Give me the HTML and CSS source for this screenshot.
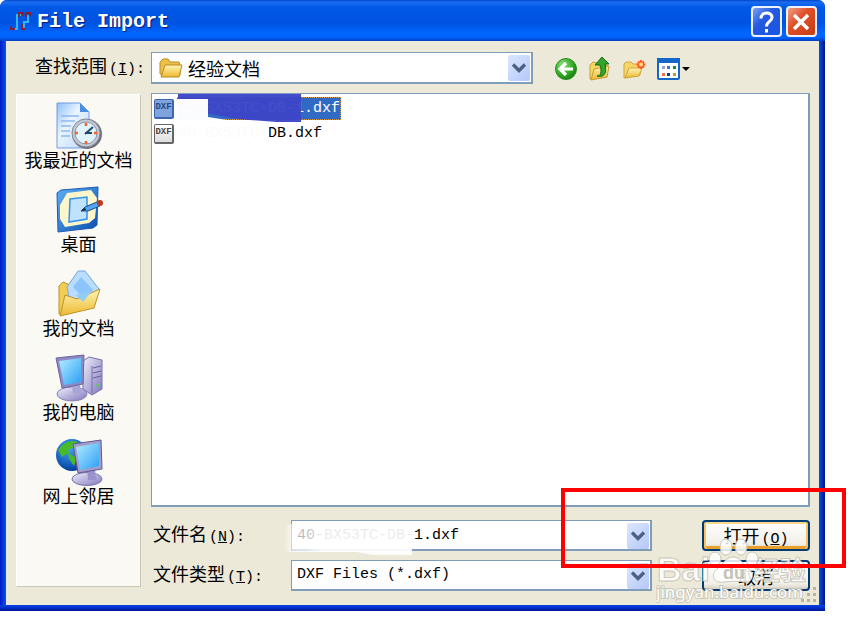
FILE: index.html
```html
<!DOCTYPE html>
<html lang="zh-CN">
<head>
    <meta charset="UTF-8">
    <meta name="viewport" content="width=device-width, initial-scale=1.0">
    <title>File Import</title>
    <link rel="stylesheet" href="styles.css">
</head>
<body>
    <!-- Shared gradients and shapes -->
    <svg class="defs" aria-hidden="true">
        <defs>
            <linearGradient id="folder" x1="0" y1="0" x2="0" y2="1"><stop offset="0" stop-color="#fff5b4"/><stop offset="1" stop-color="#edb82f"/></linearGradient>
            <linearGradient id="screen" x1="0" y1="0" x2="1" y2="1"><stop offset="0" stop-color="#b5ecff"/><stop offset="1" stop-color="#2aa0f5"/></linearGradient>
            <linearGradient id="purple" x1="0" y1="0" x2="1" y2="1"><stop offset="0" stop-color="#f0effb"/><stop offset="1" stop-color="#7f78bd"/></linearGradient>
            <linearGradient id="sheet" x1="0" y1="0" x2="1" y2="1"><stop offset="0" stop-color="#8fc0fa"/><stop offset="0.4" stop-color="#e9f4ff"/><stop offset="1" stop-color="#b9d7fb"/></linearGradient>
            <linearGradient id="board" x1="0" y1="0" x2="1" y2="1"><stop offset="0" stop-color="#5fb0f4"/><stop offset="1" stop-color="#0b4fae"/></linearGradient>
            <radialGradient id="globe" cx="0.4" cy="0.3" r="0.7"><stop offset="0" stop-color="#3fa4ff"/><stop offset="1" stop-color="#043f9c"/></radialGradient>
            <radialGradient id="green" cx="0.35" cy="0.3" r="0.8"><stop offset="0" stop-color="#8ee07a"/><stop offset="0.6" stop-color="#30a821"/><stop offset="1" stop-color="#117510"/></radialGradient>
        </defs>
        <symbol id="chevron" viewBox="0 0 22 26">
            <path d="M5 9.500l6 6 6-6" fill="none" stroke="#4d6185" stroke-width="3.400"/>
        </symbol>
    </svg>

    <main class="dialog">
        <header class="title-bar">
            <svg class="app-icon" viewBox="0 0 22 22">
                <path d="M3 18h4V4h4M12 17h2v-6h4V4" fill="none" stroke="#2fb9f2" stroke-width="2"/>
                <path d="M5 18H1v-3M9 6V2h4v3M12 13v5h3M16 6V2h4v3" fill="none" stroke="#8c1c2c" stroke-width="1.800"/>
            </svg>
            <h1>File Import</h1>
            <button class="title-btn help" aria-label="Help">
                <svg viewBox="0 0 26 26"><path d="M8 9.500c0-7.500 11-7 11-1 0 4-5.500 4-5.500 9M13.500 20v3.500" fill="none" stroke="#fff" stroke-width="3"/></svg>
            </button>
            <button class="title-btn close" aria-label="Close">
                <svg viewBox="0 0 26 26"><path d="M6 6l14 14M20 6L6 20" stroke="#fff" stroke-width="3.500"/></svg>
            </button>
        </header>

        <div class="toolbar">
            <label for="lookIn">查找范围<span class="key">(<u>I</u>):</span></label>
            <div class="combo look-in">
                <svg class="combo-icon" viewBox="0 0 24 20">
                    <path d="M1 16V4l3-3h5l2 3h9l1 3v10z" fill="#eec04a" stroke="#b88a1c"/>
                    <path d="M2 19L6 7h17l-3 12z" fill="url(#folder)" stroke="#b98a20"/>
                </svg>
                <select id="lookIn"><option>经验文档</option></select>
                <svg class="arrow"><use href="#chevron"/></svg>
            </div>
            <div class="tools">
                <button aria-label="Back">
                    <svg viewBox="0 0 24 24"><circle cx="12" cy="12" r="10.500" fill="url(#green)" stroke="#238b1a"/><path d="M19 12H7M12 6l-6 6 6 6" fill="none" stroke="#fff" stroke-width="3.200"/></svg>
                </button>
                <button aria-label="Up one level">
                    <svg viewBox="0 0 24 24"><path d="M2 22V8l3-3 4 1 2 2h8v12z" fill="#f6d667" stroke="#c89b32"/><path d="M3 23l3-11 15-3-2 11z" fill="url(#folder)" stroke="#c89b32"/><path d="M9 19c4 0 5-4 3-11H7l7-8 7 7h-4c2 8 0 14-8 12z" fill="#32a62a" stroke="#136d16"/></svg>
                </button>
                <button aria-label="New folder">
                    <svg viewBox="0 0 24 24"><path d="M2 21V7l2-2h5l2 2h7v11z" fill="#f6d667" stroke="#d0a43c"/><path d="M3 21l4-10h13l-3 8z" fill="url(#folder)" stroke="#d0a43c"/><path d="M19 3v9M14.500 7.500h9M16 4.500l6 6M22 4.500l-6 6" stroke="#ff5a22" stroke-width="2.200"/><circle cx="19" cy="7.500" r="2" fill="#ffd98a"/></svg>
                </button>
                <button class="views" aria-label="Views">
                    <svg viewBox="0 0 36 24"><rect x="2" y="2" width="21" height="20" rx="1" fill="#fff" stroke="#1467c8" stroke-width="2"/><path d="M1 1h23v5H1z" fill="#1467c8"/>
                        <path d="M6 9h3v3H6z" fill="#a69bd0"/><path d="M11 9h3v3h-3z" fill="#2878e0"/><path d="M17 9h3v3h-3z" fill="#179326"/><path d="M6 16h3v3H6z" fill="#f07048"/><path d="M11 16h3v3h-3z" fill="#143b9c"/><path d="M17 16h3v3h-3z" fill="#c69a20"/>
                        <path d="M26 10h8l-4 4z"/></svg>
                </button>
            </div>
        </div>

        <div class="content">
            <nav class="places">
                <button>
                    <svg viewBox="0 0 48 48">
                        <path d="M2 1h23l9 9v36H2z" fill="url(#sheet)" stroke="#6f9de0"/><path d="M25 1v9h9z" fill="#4a8fe6"/>
                        <path d="M6 14h18M6 19h14M6 24h10M6 29h9M6 34h9" stroke="#8db8ef" stroke-width="1.500"/>
                        <circle cx="32" cy="32" r="15" fill="#6c6f7a"/><circle cx="31" cy="31" r="14" fill="#c6c9d1" stroke="#858995"/><circle cx="31" cy="31" r="11" fill="#e0f3ff" stroke="#8297b5"/>
                        <path d="M30 32l8-7M30 31h7" stroke="#244a6c" stroke-width="2"/><path d="M31 21v3M31 39v3M20 31h3M39 31h3" stroke="#f16229" stroke-width="2.500"/>
                    </svg>
                    <span>我最近的文档</span>
                </button>
                <button>
                    <svg viewBox="0 0 48 48">
                        <path d="M2 7l4-3 37-3-1 38-4 3-35 4z" fill="url(#board)" stroke="#1c5cb4"/>
                        <path d="M12 7l24-3 6 8-2 20-6 5-24 4-5-8V19z" fill="#fff6cc"/>
                        <path d="M15 13l17-2v22l-18 3z" fill="#bfe2ff" stroke="#3292ea" stroke-width="1.500"/>
                        <path d="M26 25l4-4 12-5 3 4-12 5z" fill="#53a5f2" stroke="#174b90"/><path d="M26 25l4-3 1 2z" fill="#111"/><circle cx="45" cy="17" r="3" fill="#c3371e"/>
                    </svg>
                    <span>桌面</span>
                </button>
                <button>
                    <svg viewBox="0 0 48 48">
                        <path d="M4 44V16l4-4 7 3 7 9 22-5-5 17z" fill="#f2cd52" stroke="#bd9227"/>
                        <path d="M12 17L23 1h7l14 18-16 17-14-9z" fill="#b9dcff" stroke="#6fa9e4"/><path d="M18 17l8-10 12 13-9 9z" fill="#8cc5fb"/>
                        <path d="M5 46l5-21 12 4 23-10-6 19z" fill="url(#folder)" stroke="#bd9227"/>
                        <path d="M21 25l16-4-9 11z" fill="#93cdf4"/>
                    </svg>
                    <span>我的文档</span>
                </button>
                <button>
                    <svg viewBox="0 0 48 48">
                        <path d="M28 7l6-4 13 3v29l-10 6-9-6z" fill="url(#purple)" stroke="#7771ab"/><path d="M37 12v27" stroke="#7771ab"/><path d="M38 14l8-2M38 19l8-2M38 24l8-2" stroke="#67609f"/><circle cx="43" cy="31" r="1.500" fill="#4fd14a"/>
                        <ellipse cx="17" cy="40" rx="15" ry="7" fill="url(#purple)" stroke="#8882b5"/><path d="M17 31h8l2 9h-9z" fill="#aaa5d8"/>
                        <path d="M1 4l28-3-1 29-21 4z" fill="#8e88c4" stroke="#6b65a1"/><path d="M4 7l22-3v24L9 31z" fill="url(#screen)"/>
                    </svg>
                    <span>我的电脑</span>
                </button>
                <button>
                    <svg viewBox="0 0 48 48">
                        <circle cx="17" cy="17" r="16" fill="url(#globe)"/><path d="M3 12q8-12 20-8l-3 5-7 3 3 5 6 2-3 9-5-7-1-6-6 4z" fill="#49b92a"/>
                        <ellipse cx="32" cy="41" rx="15" ry="6.500" fill="url(#purple)" stroke="#7771ab"/><path d="M32 31h8l1 11h-8z" fill="#9a94ce"/>
                        <path d="M18 6l28-4 1 29-24 4z" fill="#a39dcc" stroke="#5f5993"/><path d="M21 9l23-4v23l-19 4z" fill="url(#screen)"/>
                    </svg>
                    <span>网上邻居</span>
                </button>
            </nav>

            <div class="right">
                <div class="file-list">
                    <ul>
                        <li class="selected"><i class="dxf">DXF</i><span>40-BX53TC-DB-1.dxf</span></li>
                        <li><i class="dxf">DXF</i><span>40-BX53TC-DB.dxf</span></li>
                    </ul>
                    <!-- Hides the project numbers -->
                    <svg class="list-mask" viewBox="0 0 200 60">
                        <path d="M26 0H149V28H125L86 25 26 14z" fill="#3d46c8" fill-opacity="0.970"/>
                        <path d="M24 5H56V23L75 26 125 30 117 32V48L110 54H26L22 48V14z" fill="#fff" fill-opacity="0.980"/>
                    </svg>
                </div>

                <form class="fields" onsubmit="return false">
                    <label for="fileName">文件名<span class="key">(<u>N</u>):</span></label>
                    <div class="combo">
                        <input id="fileName" type="text" value="40-BX53TC-DB-1.dxf">
                        <svg class="name-mask" viewBox="0 0 130 34">
                            <defs><linearGradient id="smear"><stop offset="0" stop-color="#fff" stop-opacity="0"/><stop offset="0.080" stop-color="#fff" stop-opacity="0.700"/><stop offset="0.200" stop-color="#fff" stop-opacity="0.750"/><stop offset="0.300" stop-color="#fff" stop-opacity="0.920"/></linearGradient></defs>
                            <path d="M3 3L14 1H129V33H90L74 30H6L0 26z" fill="url(#smear)"/>
                        </svg>
                        <button type="button" class="arrow" aria-label="Show names"><svg><use href="#chevron"/></svg></button>
                    </div>
                    <button class="btn btn-open">打开<span class="key">(<u>O</u>)</span></button>

                    <label for="fileType">文件类型<span class="key">(<u>T</u>):</span></label>
                    <div class="combo">
                        <select id="fileType"><option>DXF Files (*.dxf)</option></select>
                        <svg class="arrow"><use href="#chevron"/></svg>
                    </div>
                    <button type="button" class="btn">取消</button>
                </form>
            </div>
        </div>

        <svg class="grip" viewBox="0 0 18 18">
            <path d="M13 1h3v3h-3zM7 7h3v3H7zM13 7h3v3h-3zM1 13h3v3H1zM7 13h3v3H7zM13 13h3v3h-3z" fill="#b8b4a2"/>
        </svg>

        <svg class="watermark" viewBox="0 0 170 74">
            <g fill="#fff" fill-opacity="0.850" stroke="#b5b2a6" stroke-opacity="0.700">
                <text x="1" y="44" class="wm-logo">Bai</text>
                <ellipse cx="59" cy="22" rx="6" ry="7"/>
                <ellipse cx="70" cy="10" rx="6" ry="8"/>
                <ellipse cx="85" cy="10" rx="6" ry="8"/>
                <ellipse cx="96" cy="22" rx="6" ry="7"/>
                <path d="M77 20c8 0 10 8 16 12 7 6 3 15-6 13-7-1-12-1-19 0-10 2-14-7-7-13 6-4 8-12 16-12z"/>
                <text x="98" y="43" class="wm-cn">经验</text>
            </g>
            <text x="67" y="42" class="wm-du">du</text>
            <text x="0" y="61" class="wm-url">jingyan.baidu.com</text>
        </svg>

        <div class="highlight"></div>
    </main>
</body>
</html>
```
FILE: styles.css
```css
* {
    box-sizing: border-box;
}

body {
    margin: 0;
    padding: 0 31px 10px 0;
    background: #fff;
    color: #000;
    font-family: 'Noto Sans CJK SC', sans-serif;
    font-size: 18px;
    line-height: 24px;
}

button, input, select {
    font: inherit;
    color: inherit;
    margin: 0;
    padding: 0;
    border: 0;
    background: none;
    border-radius: 0;
}

.defs {
    position: absolute;
    width: 0;
    height: 0;
}

.dialog {
    position: relative;
    display: flex;
    flex-direction: column;
    min-height: calc(100vh - 10px);
    padding: 0 6px 6px;
    border-radius: 7px 7px 0 0;
    background:
        linear-gradient(#0046e6, #0015a0) bottom / 100% 6px no-repeat,
        linear-gradient(90deg, #0019c8, #0855e8) left / 6px 100% no-repeat,
        linear-gradient(90deg, #0850e4, #00138c) right / 6px 100% no-repeat,
        #ece9d8;
}

.title-bar {
    display: flex;
    align-items: center;
    gap: 4px;
    height: 41px;
    margin: 0 -6px;
    padding: 2px 8px 0 10px;
    border-radius: 7px 7px 0 0;
    background: linear-gradient(#0044c8 0, #1a6df0 5%, #0058e6 18%, #0053e0 55%, #0066ff 82%, #0060f8 92%, #003cc0 100%);
}

.app-icon {
    width: 22px;
    height: 22px;
}

.title-bar h1 {
    flex: 1;
    margin: 0 0 0 1px;
    color: #fff;
    font: bold 20px/24px 'Liberation Mono', monospace;
    text-shadow: 1px 1px 1px #0a1883;
}

.title-btn {
    width: 31px;
    height: 31px;
    border: 2px solid #eef2ff;
    border-radius: 4px;
}

.title-btn svg {
    display: block;
    width: 26px;
    height: 26px;
}

.help {
    background: linear-gradient(135deg, #7ea2f5, #2459e0 40%, #1a55e2);
}

.close {
    background: linear-gradient(135deg, #f0a088, #e0502a 40%, #c83c10);
}

.key {
    margin-left: 2px;
    font: 15px/18px 'Liberation Mono', monospace;
}

.toolbar {
    display: flex;
    align-items: center;
    padding: 11px 9px 9px 29px;
}

.toolbar label {
    width: 116px;
    padding-bottom: 5px;
    white-space: nowrap;
}

.combo {
    position: relative;
    min-width: 0;
    height: 31px;
    border: 2px solid #7f9db9;
    border-width: 1px 2px 2px 1px;
    background: #fff;
}

.look-in {
    width: 382px;
    height: 32px;
}

.combo select, .combo input {
    display: block;
    width: 100%;
    height: 100%;
    padding: 0 28px 0 5px;
    appearance: none;
    outline: none;
    font: 15px/24px 'Liberation Mono', monospace;
}

.look-in select {
    padding-left: 36px;
    font: 18px/24px 'Noto Sans CJK SC', sans-serif;
}

.combo-icon {
    position: absolute;
    left: 7px;
    top: 5px;
    width: 24px;
    height: 20px;
    pointer-events: none;
}

.arrow {
    position: absolute;
    top: 2px;
    right: 1px;
    width: 22px;
    height: 26px;
    border-radius: 2px;
    background: linear-gradient(135deg, #dbe6ff, #b4c8f8);
    pointer-events: none;
}

button.arrow {
    pointer-events: auto;
}

.arrow svg {
    display: block;
    width: 22px;
    height: 26px;
}

.tools {
    display: flex;
    gap: 10px;
    margin-left: 21px;
    padding-top: 2px;
}

.tools svg {
    display: block;
    width: 24px;
    height: 24px;
    overflow: visible;
}

.tools .views svg {
    width: 36px;
}

.content {
    flex: 1;
    display: flex;
    gap: 10px;
    padding: 0 9px 14px 10px;
}

.places {
    width: 125px;
    margin: 1px 0 4px;
    padding-top: 7px;
    background: #faf9f4;
    border: 1px solid #fff;
    border-right-color: #c9c6b8;
    border-bottom-color: #c9c6b8;
}

.places button {
    display: block;
    width: 100%;
    height: 66px;
    margin-bottom: 18px;
    line-height: 18px;
    white-space: nowrap;
}

.places svg {
    display: block;
    width: 48px;
    height: 48px;
    margin: 0 auto;
}

.places span {
    display: block;
}

.right {
    flex: 1;
    min-width: 0;
    display: flex;
    flex-direction: column;
}

.file-list {
    position: relative;
    flex: 1;
    border: 2px solid #7f9db9;
    border-width: 1px 2px 2px 1px;
    background: #fff;
}

.file-list ul {
    margin: 0;
    padding: 2px;
    list-style: none;
}

.file-list li {
    display: flex;
    align-items: center;
    gap: 3px;
    height: 25px;
    font: 15px/23px 'Liberation Mono', monospace;
}

.file-list li span {
    padding: 0 1px;
}

.dxf {
    width: 20px;
    height: 20px;
    border: 2px solid #666;
    border-width: 1px 2px 2px 1px;
    border-radius: 2px;
    background: linear-gradient(#fff, #ddd);
    color: #444;
    font: bold 9px/14px 'Liberation Mono', monospace;
    text-align: center;
}

.selected span {
    background: #316ac5;
    color: #fff;
    outline: 1px dotted #d89a4a;
    outline-offset: -1px;
}

.selected .dxf {
    border-color: #3c67b0;
    background: #7fa3dc;
    color: #27487f;
}

.list-mask {
    position: absolute;
    left: 0;
    top: 0;
    width: 200px;
    height: 60px;
    pointer-events: none;
}

.fields {
    display: grid;
    grid-template-columns: 140px 1fr 158px;
    row-gap: 9px;
    align-items: center;
    margin-top: 13px;
}

.fields label {
    padding: 0 0 4px 2px;
}

.name-mask {
    position: absolute;
    left: -9px;
    top: 1px;
    width: 130px;
    height: 34px;
    pointer-events: none;
}

.btn {
    height: 31px;
    margin-left: 50px;
    border: 2px solid #003c74;
    border-radius: 4px;
    background: linear-gradient(#fff, #f1efe7 80%, #d8d2c4);
    line-height: 24px;
}

.btn-open {
    box-shadow: inset 0 2px #fbd68d, inset 2px 0 #f9c15c, inset -2px 0 #f9c15c, inset 0 -3px #eba02c;
}

.grip {
    position: absolute;
    right: 7px;
    bottom: 7px;
    width: 18px;
    height: 18px;
}

/* Marks the open button */
.highlight {
    position: absolute;
    right: -21px;
    bottom: 43px;
    width: 285px;
    height: 80px;
    border: 4px solid #f00;
    pointer-events: none;
}

.watermark {
    position: absolute;
    right: -1px;
    bottom: 0;
    width: 170px;
    height: 74px;
    pointer-events: none;
}

.wm-logo {
    font: bold 34px 'Liberation Sans', sans-serif;
}

.wm-cn {
    font: bold 26px 'Noto Sans CJK SC', sans-serif;
}

.wm-du {
    font: bold 18px 'Liberation Sans', sans-serif;
    fill: #c5c2b5;
}

.wm-url {
    font: 17px 'Noto Sans', sans-serif;
    fill: #fff;
    stroke: #a5a296;
    stroke-width: 2px;
    stroke-opacity: 0.5;
    paint-order: stroke;
}
```
